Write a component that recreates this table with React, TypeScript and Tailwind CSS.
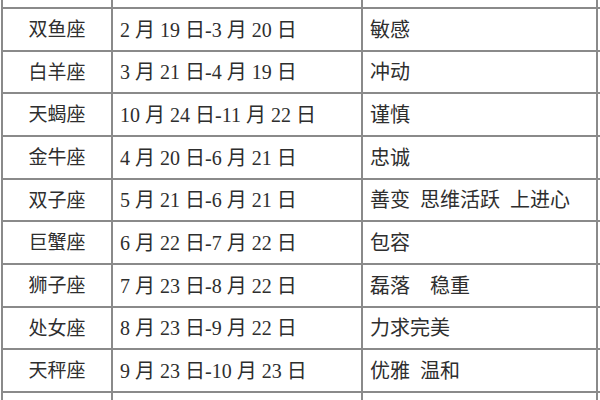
const rows = [
  { name: "", date: "", trait: "", h: "h-[9px]" },
  { name: "双鱼座", date: "2 月 19 日-3 月 20 日", trait: "敏感", h: "h-[43px]" },
  { name: "白羊座", date: "3 月 21 日-4 月 19 日", trait: "冲动", h: "h-[42px]" },
  { name: "天蝎座", date: "10 月 24 日-11 月 22 日", trait: "谨慎", h: "h-[43px]" },
  { name: "金牛座", date: "4 月 20 日-6 月 21 日", trait: "忠诚", h: "h-[43px]" },
  { name: "双子座", date: "5 月 21 日-6 月 21 日", trait: "善变  思维活跃  上进心", h: "h-[42px]" },
  { name: "巨蟹座", date: "6 月 22 日-7 月 22 日", trait: "包容", h: "h-[43px]" },
  { name: "狮子座", date: "7 月 23 日-8 月 22 日", trait: "磊落　稳重", h: "h-[43px]" },
  { name: "处女座", date: "8 月 23 日-9 月 22 日", trait: "力求完美", h: "h-[42px]" },
  { name: "天秤座", date: "9 月 23 日-10 月 23 日", trait: "优雅  温和", h: "h-[43px]" },
  { name: "", date: "", trait: "", h: "h-[20px]" },
];

export default function App() {
  return (
    <div
      className="w-[600px] h-[400px] overflow-hidden bg-white text-[#2e2e2e] leading-none"
      style={{ fontFamily: '"Liberation Serif", "Noto Sans CJK SC", serif' }}
    >
      <div className="ml-[1px] flex flex-col">
        {rows.map((r, i) => (
          <div key={i} className={`flex shrink-0 border-b-2 border-[#8a8a8a] ${r.h}`}>
            <div className="w-[112px] flex items-center justify-center text-[19px] border-x-2 border-[#8a8a8a]">
              {r.name}
            </div>
            <div className="w-[250px] flex items-center pl-[7px] text-[20px] border-r-2 border-[#8a8a8a] whitespace-pre">
              {r.date}
            </div>
            <div className="w-[235px] flex items-center pl-[7px] text-[20px] border-r-2 border-[#8a8a8a] whitespace-pre">
              {r.trait}
            </div>
          </div>
        ))}
      </div>
    </div>
  );
}
